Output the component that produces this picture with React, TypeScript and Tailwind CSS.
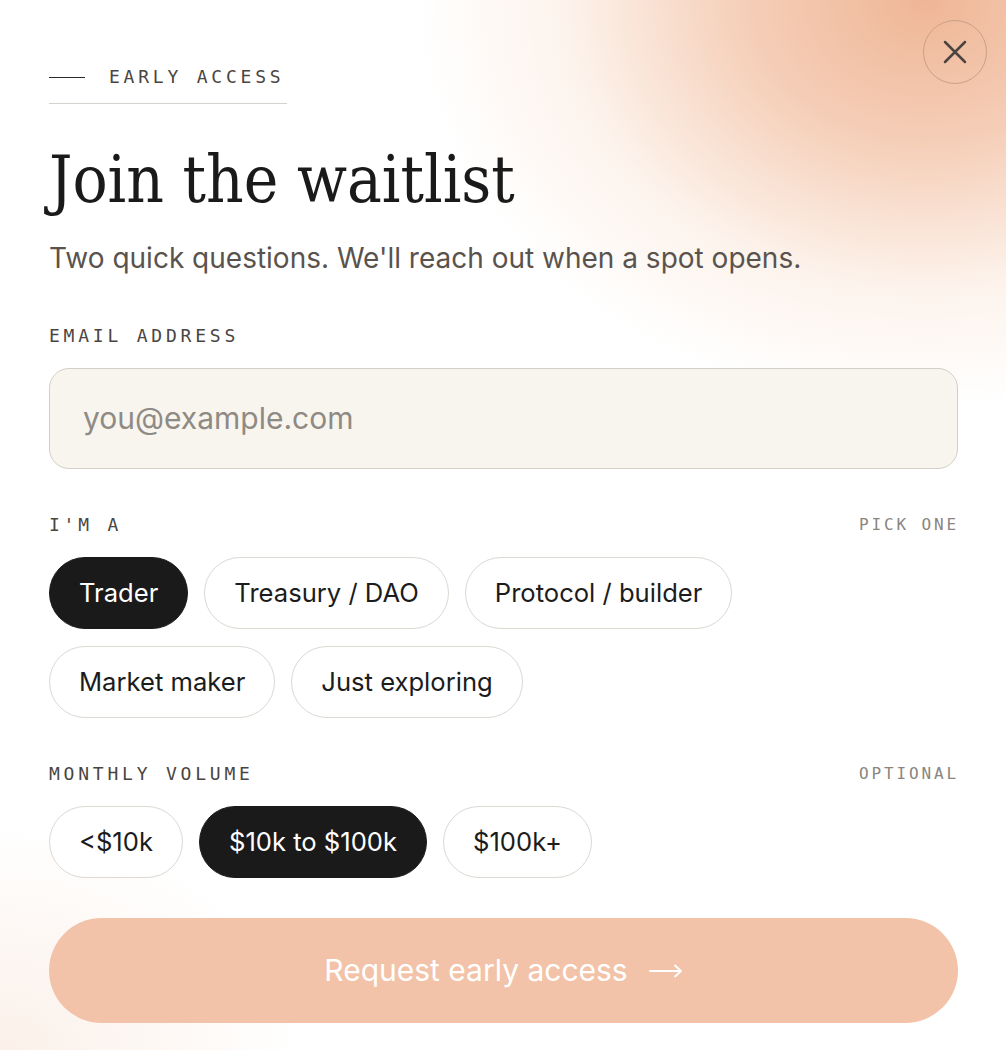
export default function App() {
  const roles = ["Trader", "Treasury / DAO", "Protocol / builder", "Market maker", "Just exploring"];
  const volumes = ["<$10k", "$10k to $100k", "$100k+"];
  const label = "font-['DejaVu_Sans_Mono',monospace] text-[18px] leading-[20px] tracking-[0.21em] text-[#4a4541]";
  const hint = "font-['DejaVu_Sans_Mono',monospace] text-[16px] leading-[20px] tracking-[0.18em] text-[#8a857f] -mr-[1px]";

  const chip = (text: string, active: boolean) => (
    <div
      key={text}
      className={`h-[72px] px-[29px] rounded-full border flex items-center text-[25.6px] ${
        active ? "bg-[#1a1a1a] border-[#1a1a1a] text-white" : "bg-white border-[#dcd8d2] text-[#1c1c1c]"
      }`}
    >
      {text}
    </div>
  );

  return (
    <div className="relative w-[1006px] h-[1050px] overflow-hidden bg-white font-['Inter',sans-serif]">
      {/* warm glow */}
      <div className="pointer-events-none absolute inset-0 bg-[radial-gradient(ellipse_600px_480px_at_92%_0%,#efb696_0%,rgba(242,190,160,0.75)_30%,rgba(248,220,200,0.35)_60%,rgba(255,255,255,0)_85%)]" />
      <div className="pointer-events-none absolute inset-0 bg-[radial-gradient(ellipse_380px_280px_at_0%_100%,rgba(245,218,200,0.4)_0%,rgba(255,255,255,0)_80%)]" />

      <button className="absolute top-[20px] right-[19px] w-[64px] h-[64px] rounded-full border border-[#c9a089] flex items-center justify-center">
        <svg width="24" height="24" viewBox="0 0 24 24" fill="none" stroke="#4a4540" strokeWidth="2.5" strokeLinecap="round">
          <path d="M2 2L22 22M22 2L2 22" />
        </svg>
      </button>

      <div className="relative px-[49px] pr-[48px] pt-[66px]">
        <div className="w-[238px] border-b border-[#d6d2cd] pb-[15px]">
          <div className="flex items-center gap-[24px] h-[22px]">
            <div className="w-[36px] h-px bg-[#2a2a2a]" />
            <span className={label}>EARLY ACCESS</span>
          </div>
        </div>

        <h1 className="mt-[40px] font-['DejaVu_Serif_Condensed','DejaVu_Serif',serif] text-[65px] leading-[72px] text-[#1a1a1a]">
          Join the waitlist
        </h1>
        <p className="mt-[24px] text-[28px] leading-[36px] text-[#5a534d]">
          Two quick questions. We'll reach out when a spot opens.
        </p>

        <div className={`mt-[50px] ${label}`}>EMAIL ADDRESS</div>
        <div className="mt-[22px] h-[101px] rounded-[20px] border border-[#d3cec7] bg-[#f8f5ef] flex items-center pl-[33px] text-[30px] text-[#8f8a84]">
          you@example.com
        </div>

        <div className="mt-[46px] flex items-center justify-between">
          <span className={label}>I'M A</span>
          <span className={hint}>PICK ONE</span>
        </div>
        <div className="mt-[22px] flex flex-wrap gap-x-[16px] gap-y-[17px]">
          {roles.map((r, i) => chip(r, i === 0))}
        </div>

        <div className="mt-[46px] flex items-center justify-between">
          <span className={label}>MONTHLY VOLUME</span>
          <span className={hint}>OPTIONAL</span>
        </div>
        <div className="mt-[22px] flex flex-wrap gap-x-[16px]">
          {volumes.map((v, i) => chip(v, i === 1))}
        </div>

        <button className="mt-[40px] w-full h-[105px] rounded-full bg-[#f2c3a8] text-white text-[30px] flex items-center justify-center gap-[21px]">
          <span>Request early access</span>
          <svg width="34" height="14" viewBox="0 0 34 14" fill="none" stroke="white" strokeWidth="1.8" strokeLinecap="round" strokeLinejoin="round">
            <path d="M1 7H32M26 1.5L32 7L26 12.5" />
          </svg>
        </button>
      </div>
    </div>
  );
}
